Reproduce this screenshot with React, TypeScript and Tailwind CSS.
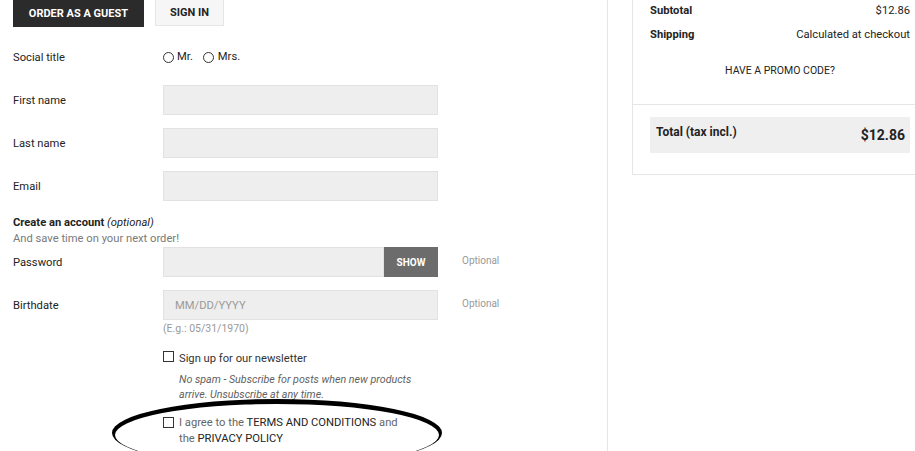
import React from "react";

function Row({ label, children, extra }: { label: string; children: React.ReactNode; extra?: React.ReactNode }) {
  return (
    <div className="flex items-center h-[30px]">
      <div className="w-[150px] pt-[2px] text-[11.2px] text-[#232323]">{label}</div>
      <div className="w-[275px] h-[30px]">{children}</div>
      {extra}
    </div>
  );
}

function Input({ placeholder }: { placeholder?: string }) {
  return (
    <div className="w-full h-full bg-[#eeeeee] border border-[#e2e2e2] flex items-center pl-[11px] pt-[2px] text-[11.2px] text-[#9a9a9a]">
      {placeholder}
    </div>
  );
}

function Box() {
  return <span className="inline-block w-[11px] h-[11px] border border-[#333] bg-white shrink-0" />;
}

export default function App() {
  return (
    <div className="relative w-[915px] h-[451px] overflow-hidden bg-white flex font-['Roboto',sans-serif]">
      <div className="w-[608px] shrink-0 border-r border-[#e6e6e6] pl-[13px]">
        <div className="flex gap-[11px] h-[27px]">
          <div className="w-[131px] h-[27px] pt-[1px] bg-[#2b2b2b] text-white text-[11px] font-bold flex items-center justify-center">
            ORDER AS A GUEST
          </div>
          <div className="w-[69px] h-[26px] pt-[1px] bg-[#f6f6f6] border border-[#e6e6e6] border-t-0 text-[#232323] text-[11px] font-bold flex items-center justify-center">
            SIGN IN
          </div>
        </div>

        <div className="mt-[15px] flex flex-col gap-[13px]">
          <Row label="Social title">
            <div className="flex items-center h-full text-[11.2px] text-[#232323]">
              <span className="inline-block w-[11px] h-[11px] rounded-full border border-[#333]" />
              <span className="ml-[3px] pt-[1px]">Mr.</span>
              <span className="ml-[10px] inline-block w-[11px] h-[11px] rounded-full border border-[#333]" />
              <span className="ml-[4px] pt-[1px]">Mrs.</span>
            </div>
          </Row>
          <Row label="First name"><Input /></Row>
          <Row label="Last name"><Input /></Row>
          <Row label="Email"><Input /></Row>
        </div>

        <div className="mt-[13px] h-[33px] pt-[1px] text-[11.2px] leading-[16px]">
          <div className="text-[#232323]">
            <span className="font-bold">Create an account</span> <em className="italic">(optional)</em>
          </div>
          <div className="text-[#7a7a7a]">And save time on your next order!</div>
        </div>

        <Row
          label="Password"
          extra={<div className="ml-[24px] -mt-[3px] text-[10px] text-[#999]">Optional</div>}
        >
          <div className="flex h-full">
            <div className="flex-1 bg-[#eeeeee] border border-[#e2e2e2]" />
            <div className="w-[54px] pt-[1px] bg-[#6c6c6c] text-white text-[10px] font-bold flex items-center justify-center">
              SHOW
            </div>
          </div>
        </Row>

        <div className="mt-[13px]">
          <Row
            label="Birthdate"
            extra={<div className="ml-[24px] -mt-[3px] text-[10px] text-[#999]">Optional</div>}
          >
            <Input placeholder="MM/DD/YYYY" />
          </Row>
          <div className="pl-[150px] mt-[2px] text-[10.5px] leading-[14px] text-[#9a9a9a]">(E.g.: 05/31/1970)</div>
        </div>

        <div className="pl-[150px] mt-[14px]">
          <div className="flex items-start text-[11.2px] leading-[16px] text-[#333]">
            <span className="mt-[1px]"><Box /></span>
            <span className="ml-[5px] pt-[1px]">Sign up for our newsletter</span>
          </div>
          <div className="pl-[16px] mt-[5px] text-[10.7px] leading-[15px] italic text-[#5f5f5f]">
            No spam - Subscribe for posts when new products
            <br />
            arrive. Unsubscribe at any time.
          </div>
          <div className="mt-[12px] flex items-start text-[11.2px] leading-[16px] text-[#666]">
            <span className="mt-[3px]"><Box /></span>
            <span className="ml-[5px] pt-[1px]">
              I agree to the <span className="text-[#232323]">TERMS AND CONDITIONS</span> and
              <br />
              the <span className="text-[#232323]">PRIVACY POLICY</span>
            </span>
          </div>
        </div>
      </div>

      <div className="pl-[24px] shrink-0">
        <div className="w-[296px] border-x border-b border-[#e6e6e6]">
          <div className="border-b border-[#e6e6e6] px-[17px] pt-[3px] pb-[25px]">
            <div className="flex justify-between text-[11.2px] leading-[16px] text-[#232323]">
              <span className="font-bold">Subtotal</span>
              <span>$12.86</span>
            </div>
            <div className="mt-[8px] flex justify-between text-[11.2px] leading-[16px] text-[#232323]">
              <span className="font-bold">Shipping</span>
              <span>Calculated at checkout</span>
            </div>
            <div className="mt-[20px] text-center text-[10.5px] leading-[16px] text-[#232323]">HAVE A PROMO CODE?</div>
          </div>
          <div className="px-[17px] pt-[12px] pb-[21px]">
            <div className="h-[36px] bg-[#efefef] flex items-center justify-between pl-[6px] pr-[5px] text-[#232323]">
              <span className="text-[12px] font-bold -mt-[6px]">Total (tax incl.)</span>
              <span className="text-[14px] font-bold">$12.86</span>
            </div>
          </div>
        </div>
      </div>

      <svg className="absolute left-0 top-0 pointer-events-none" width="915" height="451" viewBox="0 0 915 451">
        <path
          fillRule="evenodd"
          fill="#000"
          d="M112 433 A165 34 0 1 0 442 433 A165 34 0 1 0 112 433 Z M115 435 A162 31 0 1 0 439 435 A162 31 0 1 0 115 435 Z"
        />
      </svg>
    </div>
  );
}
